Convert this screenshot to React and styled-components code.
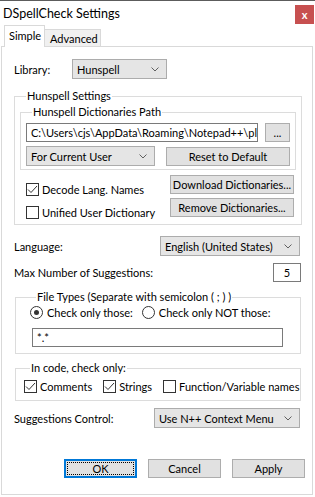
import React from "react";
import styled, { createGlobalStyle, css } from "styled-components";

const FONT = `Lato, "Noto Sans", sans-serif`;

const GlobalStyle = createGlobalStyle`
  html, body {
    margin: 0;
    padding: 0;
    background: #ffffff;
  }
  body {
    font-family: ${FONT};
    font-size: 11px;
    color: #000000;
  }
  * {
    box-sizing: border-box;
  }
`;

const Window = styled.div`
  width: 315px;
  height: 497px;
  display: flex;
  flex-direction: column;
  background: #ffffff;
  border-top: 1px solid #5c5c5c;
  overflow: hidden;
`;

const TitleBar = styled.div`
  height: 24px;
  display: flex;
  align-items: center;
  justify-content: space-between;
  padding-left: 3px;
  padding-right: 1px;
`;

const Title = styled.span`
  font-size: 12.5px;
  margin-top: 1px;
`;

const CloseButton = styled.div`
  width: 19px;
  height: 19px;
  background: #c75050;
  color: #ffffff;
  font-weight: bold;
  font-size: 11px;
  display: flex;
  align-items: center;
  justify-content: center;
  margin-top: 2px;
`;

const TabStrip = styled.div`
  height: 21px;
  display: flex;
  align-items: flex-end;
  padding-left: 4px;
  position: relative;
  z-index: 1;
`;

const Tab = styled.div`
  display: flex;
  align-items: center;
  border: 1px solid #d9d9d9;
  border-bottom: none;
  ${({ $active }) =>
    $active
      ? css`
          width: 41px;
          height: 22px;
          margin-bottom: -1px;
          background: #ffffff;
          padding: 0 0 2px 4px;
        `
      : css`
          width: 56px;
          height: 17px;
          background: #f0f0f0;
          border-left: none;
          padding: 0 0 0 5px;
        `}
`;

const Panel = styled.div`
  flex: 1;
  margin: 0 2px 2px 1px;
  border: 1px solid #d9d9d9;
  padding: 12px 11px 0 11px;
  display: flex;
  flex-direction: column;
`;

const Row = styled.div`
  display: flex;
  align-items: center;
  justify-content: ${({ $spread }) => ($spread ? "space-between" : "flex-start")};
  margin-top: ${({ $top }) => $top || 0}px;
  gap: ${({ $gap }) => $gap || 0}px;
`;

const Label = styled.span`
  width: ${({ $w }) => ($w ? `${$w}px` : "auto")};
  flex-shrink: 0;
  padding-left: 1px;
`;

const Group = styled.fieldset`
  margin: ${({ $top }) => $top || 0}px 0 0 ${({ $left }) => $left || 0}px;
  width: ${({ $w }) => $w}px;
  border: 1px solid #dcdcdc;
  padding: ${({ $pad }) => $pad};
  min-width: 0;
`;

const Legend = styled.legend`
  padding: 0 1px;
  margin-left: ${({ $indent }) => $indent || 6}px;
  line-height: 14px;
`;

const Select = styled.div`
  width: ${({ $w }) => $w}px;
  height: 20px;
  background: #e5e5e5;
  border: 1px solid #acacac;
  display: flex;
  align-items: center;
  justify-content: space-between;
  padding: 0 7px 0 4px;
  margin-right: ${({ $right }) => $right || 0}px;
  flex-shrink: 0;
  white-space: nowrap;
`;

const Chevron = () => (
  <svg width="8" height="5" viewBox="0 0 8 5">
    <polyline points="0.5,0.5 4,4 7.5,0.5" fill="none" stroke="#606060" strokeWidth="1" />
  </svg>
);

const TextBox = styled.div`
  width: ${({ $w }) => $w}px;
  height: 19px;
  border: 1px solid #7a7a7a;
  background: #ffffff;
  display: flex;
  align-items: center;
  padding: 0 4px;
  white-space: nowrap;
  overflow: hidden;
  flex-shrink: 0;
  margin-left: ${({ $left }) => $left || 0}px;
  justify-content: ${({ $center }) => ($center ? "center" : "flex-start")};
`;

const Button = styled.div`
  width: ${({ $w }) => $w}px;
  height: 19px;
  background: #e1e1e1;
  border: 1px solid #adadad;
  display: flex;
  align-items: center;
  justify-content: center;
  white-space: nowrap;
  flex-shrink: 0;
  position: relative;
  ${({ $default }) =>
    $default &&
    css`
      border: 2px solid #0078d7;
      &::after {
        content: "";
        position: absolute;
        inset: 1px;
        border: 1px dotted #000000;
      }
    `}
`;

const Check = styled.label`
  display: flex;
  align-items: center;
  gap: ${({ $gap }) => $gap || 3}px;
  white-space: nowrap;
`;

const Box = styled.span`
  width: 13px;
  height: 13px;
  border: 1px solid #333333;
  background: #ffffff;
  display: flex;
  align-items: center;
  justify-content: center;
  flex-shrink: 0;
`;

const Radio = styled.span`
  width: 13px;
  height: 13px;
  border: 1px solid #333333;
  border-radius: 50%;
  display: flex;
  align-items: center;
  justify-content: center;
  flex-shrink: 0;
  &::after {
    content: "";
    width: 5px;
    height: 5px;
    border-radius: 50%;
    background: ${({ $on }) => ($on ? "#333333" : "transparent")};
  }
`;

const CheckBox = ({ checked, children }) => (
  <Check>
    <Box>
      {checked && (
        <svg width="11" height="9" viewBox="0 0 11 9">
          <polyline points="1,4.5 4,7.5 10,1" fill="none" stroke="#333" strokeWidth="1" />
        </svg>
      )}
    </Box>
    <span>{children}</span>
  </Check>
);

const RadioButton = ({ on, children }) => (
  <Check $gap={4}>
    <Radio $on={on} />
    <span>{children}</span>
  </Check>
);

const Columns = styled.div`
  display: flex;
  justify-content: space-between;
  margin-top: 5px;
`;

const Stack = styled.div`
  display: flex;
  flex-direction: column;
  gap: ${({ $gap }) => $gap}px;
  padding-top: ${({ $top }) => $top || 0}px;
  padding-left: ${({ $left }) => $left || 0}px;
  padding-right: ${({ $right }) => $right || 0}px;
`;

const Footer = styled.div`
  display: flex;
  justify-content: flex-end;
  gap: 11px;
  margin-top: 31px;
  margin-right: -4px;
`;

export default function App() {
  return (
    <>
      <GlobalStyle />
      <Window>
        <TitleBar>
          <Title>DSpellCheck Settings</Title>
          <CloseButton>x</CloseButton>
        </TitleBar>
        <TabStrip>
          <Tab $active>Simple</Tab>
          <Tab>Advanced</Tab>
        </TabStrip>
        <Panel>
          <Row>
            <Label $w={59}>Library:</Label>
            <Select $w={95}>
              <span>Hunspell</span>
              <Chevron />
            </Select>
          </Row>

          <Group $top={10} $left={1} $w={288} $pad="2px 5px 5px 5px">
            <Legend>Hunspell Settings</Legend>
            <Group $w={276} $pad="4px 5px 3px 5px">
              <Legend>Hunspell Dictionaries Path</Legend>
              <Row $spread>
                <TextBox $w={232}>C:\Users\cjs\AppData\Roaming\Notepad++\pl</TextBox>
                <Button $w={25}>...</Button>
              </Row>
              <Row $spread $top={4}>
                <Select $w={129}>
                  <span>For Current User</span>
                  <Chevron />
                </Select>
                <Button $w={124}>Reset to Default</Button>
              </Row>
            </Group>
            <Columns>
              <Stack $gap={10} $top={8} $left={6}>
                <CheckBox checked>Decode Lang. Names</CheckBox>
                <CheckBox>Unified User Dictionary</CheckBox>
              </Stack>
              <Stack $gap={4} $right={2}>
                <Button $w={124}>Download Dictionaries...</Button>
                <Button $w={124}>Remove Dictionaries...</Button>
              </Stack>
            </Columns>
          </Group>

          <Row $spread $top={11}>
            <Label>Language:</Label>
            <Select $w={140} $right={1}>
              <span>English (United States)</span>
              <Chevron />
            </Select>
          </Row>

          <Row $spread $top={7}>
            <Label>Max Number of Suggestions:</Label>
            <TextBox $w={28} $center>5</TextBox>
          </Row>

          <Group $top={8} $left={2} $w={286} $pad="2px 14px 6px 14px">
            <Legend>File Types (Separate with semicolon ( ; ) )</Legend>
            <Row $gap={9}>
              <RadioButton on>Check only those:</RadioButton>
              <RadioButton>Check only NOT those:</RadioButton>
            </Row>
            <Row $top={9}>
              <TextBox $w={251} $left={2}>*.*</TextBox>
            </Row>
          </Group>

          <Group $top={7} $left={2} $w={286} $pad="5px 8px 7px 8px">
            <Legend>In code, check only:</Legend>
            <Row $gap={11}>
              <CheckBox checked>Comments</CheckBox>
              <CheckBox checked>Strings</CheckBox>
              <CheckBox>Function/Variable names</CheckBox>
            </Row>
          </Group>

          <Row $spread $top={7}>
            <Label>Suggestions Control:</Label>
            <Select $w={146} $right={1}>
              <span>Use N++ Context Menu</span>
              <Chevron />
            </Select>
          </Row>

          <Footer>
            <Button $w={73} $default>
              OK
            </Button>
            <Button $w={73}>Cancel</Button>
            <Button $w={73}>Apply</Button>
          </Footer>
        </Panel>
      </Window>
    </>
  );
}
